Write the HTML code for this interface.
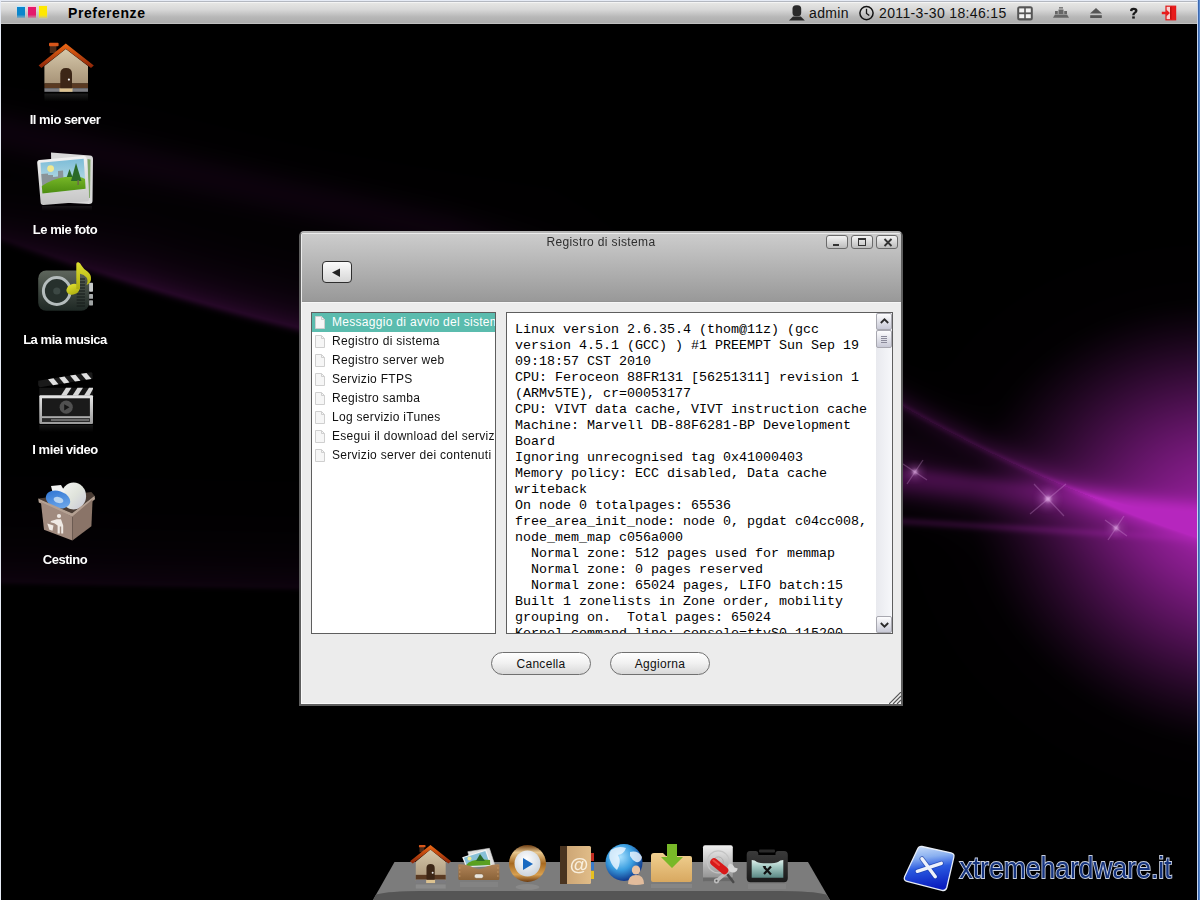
<!DOCTYPE html>
<html><head><meta charset="utf-8">
<style>
*{margin:0;padding:0;box-sizing:border-box}
html,body{width:1200px;height:900px;overflow:hidden;font-family:"Liberation Sans",sans-serif}
html{background:#000}
body{background:radial-gradient(ellipse 270px 225px at 1235px 525px,rgba(120,28,128,0.9),rgba(60,14,66,0.6) 55%,rgba(0,0,0,0) 100%),#000}
#bg{position:absolute;left:0;top:0}
.abs{position:absolute}
#bg{position:absolute;left:0;top:0;width:1200px;height:900px}
#topbar{position:absolute;left:0;top:0;width:1200px;height:24px;background:linear-gradient(#e6e6e4 12.5%,#d8d8d8 40%,#b8b8b8 70%,#acacac 95.8%,#c0c0c0 95.8%)}
#edgeL{position:absolute;left:0;top:0;width:1px;height:900px;background:#e6ebf5}
#edgeT{position:absolute;left:0;top:0;width:1200px;height:1px;background:#e6ebf5}
#edgeT2{position:absolute;left:1px;top:1px;width:1196px;height:1px;background:#b4b8c0}
#edgeT3{position:absolute;left:1px;top:2px;width:1196px;height:1px;background:#f4f4f4}
#edgeR{position:absolute;left:1197px;top:0;width:1px;height:900px;background:#c8d6ee}
#edgeR2{position:absolute;left:1198px;top:0;width:2px;height:900px;background:linear-gradient(90deg,#3a68b0 50%,#5a8ad0 50%)}
.tbtext{position:absolute;top:4px;font-size:14px;letter-spacing:0.36px;color:#111;line-height:18px}
.dlabel{position:absolute;width:130px;left:0;text-align:center;color:#fff;font-weight:bold;font-size:13px;letter-spacing:-0.45px;line-height:16px}
#dlg{position:absolute;left:299px;top:231px;width:604px;height:475px;border:2px solid #5e5e5e;border-top-color:#b4b4b4;border-radius:5px 5px 0 0;background:#ececec;overflow:hidden;box-shadow:inset 1px -1px 0 #fafafa}
#dlgtitle{position:absolute;left:0;top:0;width:600px;height:69px;background:linear-gradient(#cdcdcd,#999 98%,#8e8e8e);box-shadow:inset 1px 1px 0 #ececec,0 1px 0 #f6f6f6}

.tbtn{position:absolute;width:22px;height:14px;border:1px solid #6a6a6a;border-radius:3px;background:linear-gradient(#f4f4f4,#bcbcbc)}
#list{position:absolute;left:10px;top:79px;width:185px;height:322px;border:1px solid #5e5e5e;background:#fff;overflow:hidden}
.sel{position:absolute;left:0;top:0;width:183px;height:19px;background:#5bbcae}
.li{position:absolute;left:0;height:19px;width:183px;white-space:nowrap;font-size:12px;letter-spacing:0.3px;line-height:19px;color:#111;padding-left:20px;overflow:hidden}
.doc{position:absolute;left:2px;top:2px}
#txt{position:absolute;left:205px;top:79px;width:387px;height:322px;border:1px solid #5e5e5e;background:#fff;overflow:hidden}
#log{position:absolute;left:8px;top:9px;font-size:13.33px;line-height:16px;color:#000;white-space:pre}
#sb{position:absolute;left:369px;top:0;width:16px;height:320px;background:linear-gradient(90deg,#e8e9ee,#f6f7fa)}
.sbb{position:absolute;left:0;width:16px;height:17px;border:1px solid #a8a8b0;border-radius:2px;background:linear-gradient(#fdfdfe,#c8c9d6)}
.pill{position:absolute;width:100px;height:23px;border:1px solid #707070;border-radius:12px;background:linear-gradient(#ffffff,#f0f0f0 50%,#d8d8d8);text-align:center;font-size:12px;letter-spacing:0.3px;line-height:23px;color:#111}
.mono{font-family:"Liberation Mono",monospace}
</style></head><body>
<canvas id="bg" width="1200" height="900"></canvas>
<script>
(function(){
var c=document.getElementById('bg'),ctx=c.getContext('2d'),W=1200,H=900;
var im=ctx.createImageData(W,H),D=im.data;
var cs=Math.cos(0.42),sn=Math.sin(0.42);
function ex(v){return Math.exp(v);}
for(var y=0;y<H;y++){for(var x=0;x<W;x++){
  var I=0;
  // right glow
  var dx=x-1235,dy=y-525,u=dx*0.97+dy*0.24,v=-dx*0.24+dy*0.97;
  var q=u*u/(270*270)+v*v/(225*225);var qq=Math.max(0,1-q);I+=0.66*qq*Math.sqrt(qq)+0.3*ex(-3*q);
  if(x>850){
    var t=(x-903)/297;
    var xx=x-903;
    var y1c=406+0.57*xx-0.00047*xx*xx;
    var d1=y-y1c;
    var tc=Math.max(0,Math.min(1,t));
    var a1=0.5+0.18*tc;
    I+=a1*(0.26*ex(-d1*d1/16)+0.22*ex(-d1*d1/200)+0.12*(d1<0?ex(-d1*d1/600):0));
    var yh2=462+xx*0.3;var dh2=y-yh2;I+=0.13*ex(-dh2*dh2/1400)*(1-0.6*tc);
    // ribbon B
    var yb=476+xx*0.12;
    var db=y-yb;
    I+=0.34*(db<0?ex(-db*db/150):ex(-db*db/350))*(1-0.4*t);
    // streak 2
    var y2=521+xx*0.06;
    var d2=y-y2;
    I+=0.2*ex(-d2*d2/20)*Math.max(0,1-Math.max(0,t-0.4)*1.6);
  }
  if(x<700){
    var ye=236+0.36*x-0.000195*x*x;
    if(x>297) ye=326+(x-297)*0.15;
    var de=ye-y;
    var ib=de>=0?(0.75*ex(-de/20)+0.25*ex(-de/60)):ex(-de*de/30);
    I+=0.24*ib*(x<550?1:Math.max(0,1-(x-550)/150))*Math.min(1,0.45+x/260);
    var yh=131+0.223*x;
    var dh=y-yh;
    I+=0.07*ex(-dh*dh/500)*(x<450?1:Math.max(0,1-(x-450)/150));
    var yl=580+x*0.02;
    var dl=yl-y;
    I+=0.085*(dl>=0?ex(-dl/32):ex(-dl*dl/16))*(x<420?1:Math.max(0,1-(x-420)/200));
  }
  if(I>1.2)I=1.2;
  var k=(y*W+x)*4;
  D[k]=Math.min(255,I*152);D[k+1]=Math.min(255,I*32);D[k+2]=Math.min(255,I*158);D[k+3]=255;
}}
ctx.putImageData(im,0,0);
})();
</script>
<svg id="spk" width="1200" height="900" viewBox="0 0 1200 900" style="position:absolute;left:0;top:0">
  <defs>
    <filter id="b15" x="-50%" y="-50%" width="200%" height="200%"><feGaussianBlur stdDeviation="1.8"/></filter>
    <filter id="b4" x="-50%" y="-50%" width="200%" height="200%"><feGaussianBlur stdDeviation="4"/></filter>
    <filter id="b1" x="-50%" y="-50%" width="200%" height="200%"><feGaussianBlur stdDeviation="0.7"/></filter>
  </defs>
  <g fill="#d080d8" opacity="0.45">
    <circle cx="915" cy="472" r="6" filter="url(#b4)"/>
    <circle cx="1048" cy="499" r="8" filter="url(#b4)"/>
    <circle cx="1116" cy="528" r="6" filter="url(#b4)"/>
  </g>
  <g fill="#f0c0f4" opacity="0.85">
    <circle cx="915" cy="472" r="2.2" filter="url(#b15)"/>
    <circle cx="1048" cy="499" r="2.8" filter="url(#b15)"/>
    <circle cx="1116" cy="528" r="2.2" filter="url(#b15)"/>
  </g>
  <g stroke="#e8b0ee" stroke-width="1.3" opacity="0.26" filter="url(#b1)">
    <path d="M903 464L927 480M907 484L923 460"/>
    <path d="M1034 484L1064 516M1066 484L1030 514"/>
    <path d="M1105 520L1127 536M1108 540L1124 516"/>
  </g>
</svg>

<div id="topbar"></div>
<div id="edgeT"></div><div id="edgeT2"></div><div id="edgeT3"></div>
<div id="edgeL"></div><div id="edgeR"></div><div id="edgeR2"></div>
<!-- logo squares -->
<div class="abs" style="left:17px;top:7px;width:8px;height:11px;background:linear-gradient(#0a86cc 70%,rgba(10,134,204,0.25));box-shadow:0 -1px 1px #bfe6ff"></div>
<div class="abs" style="left:28px;top:7px;width:8px;height:11px;background:linear-gradient(#e4196b 70%,rgba(228,25,107,0.25));box-shadow:0 -1px 1px #ffc8dc"></div>
<div class="abs" style="left:39px;top:6px;width:8px;height:12px;background:linear-gradient(#ffe800 75%,rgba(255,232,0,0.3));box-shadow:0 0 1px #fff080"></div>
<div class="abs" style="left:68px;top:4px;font-size:14px;font-weight:bold;letter-spacing:0.6px;color:#000;line-height:18px">Preferenze</div>

<svg class="abs" style="left:788px;top:4px" width="18" height="18" viewBox="0 0 18 18"><rect x="4.5" y="1.2" width="8.7" height="11" rx="3.5" fill="#2a2a2a"/><path d="M1 16.6L5 12.5H12.8L16.8 16.6Z" fill="#2a2a2a"/></svg>
<svg class="abs" style="left:858px;top:5px" width="17" height="17" viewBox="0 0 17 17"><circle cx="8.5" cy="8.1" r="6.6" fill="none" stroke="#151515" stroke-width="1.5"/><path d="M8.5 3.8V8.4L11.3 10.6" fill="none" stroke="#151515" stroke-width="1.3"/></svg>
<svg class="abs" style="left:1016px;top:5px" width="18" height="17" viewBox="0 0 18 17"><rect x="1.2" y="1.2" width="15.6" height="14.2" rx="2.5" fill="#555"/><rect x="3.2" y="3.4" width="5" height="4" fill="#f2f2f2"/><rect x="9.8" y="3.4" width="5" height="4" fill="#f2f2f2"/><rect x="3.2" y="9.2" width="5" height="4" fill="#f2f2f2"/><rect x="9.8" y="9.2" width="5" height="4" fill="#f2f2f2"/></svg>
<svg class="abs" style="left:1052px;top:6px" width="18" height="13" viewBox="0 0 18 13"><rect x="7" y="1.2" width="4" height="1.3" fill="#666"/><rect x="6.5" y="3.5" width="5" height="4.5" fill="#666"/><rect x="3" y="5" width="2.8" height="3" fill="#666"/><rect x="12.2" y="5" width="2.8" height="3" fill="#666"/><path d="M3 8.6H15L17 11.8H1Z" fill="#666"/></svg>
<svg class="abs" style="left:1089px;top:7px" width="14" height="12" viewBox="0 0 14 12"><path d="M7 1L13 6.6H1Z" fill="#555"/><rect x="1.2" y="8.2" width="11.6" height="2.8" fill="#555"/></svg>
<svg class="abs" style="left:1128px;top:7px" width="12" height="12" viewBox="0 0 12 12"><path d="M2 4Q2 0.8 5.5 0.8Q9.5 0.8 9.5 3.8Q9.5 5.6 7.5 6.6Q6.6 7.1 6.6 8.2H4.2Q4.2 6.2 5.8 5.3Q7 4.6 7 3.8Q7 2.9 5.6 2.9Q4.4 2.9 4.4 4.2Z" fill="#1a1a1a"/><rect x="4.2" y="9.4" width="2.6" height="2.2" fill="#1a1a1a"/></svg>
<svg class="abs" style="left:1161px;top:5px" width="16" height="16" viewBox="0 0 16 16"><rect x="5" y="1.2" width="9.6" height="13.6" fill="#f8d0d0" stroke="#e01818" stroke-width="1.2"/><path d="M9 1.2H14.6V14.8H9Z" fill="#e81c1c"/><path d="M9 2.5L10.5 1.2V14.8L9 13.5Z" fill="#c01010"/><path d="M0.8 6.7H5.2V4.6L9 8L5.2 11.4V9.3H0.8Z" fill="#e81c1c"/></svg>
<div class="tbtext" style="left:809px">admin</div>
<div class="tbtext" style="left:879px">2011-3-30 18:46:15</div>


<!-- desktop icons -->
<svg class="abs" style="left:30px;top:36px" width="70" height="70" viewBox="0 0 70 70">
  <defs>
    <linearGradient id="hwall" x1="0" y1="0" x2="0" y2="1"><stop offset="0" stop-color="#d6c8aa"/><stop offset="1" stop-color="#a89478"/></linearGradient>
    <linearGradient id="hroof" x1="0" y1="0" x2="0" y2="1"><stop offset="0" stop-color="#ee6a16"/><stop offset="1" stop-color="#8c2408"/></linearGradient>
    <linearGradient id="refl" x1="0" y1="0" x2="0" y2="1"><stop offset="0" stop-color="#fff" stop-opacity="0.22"/><stop offset="1" stop-color="#fff" stop-opacity="0"/></linearGradient>
  </defs>
  <rect x="19.8" y="8" width="6.6" height="9" fill="#4a2a18"/>
  <rect x="19" y="6.8" width="9.6" height="3.4" rx="1" fill="#d8561a"/>
  <path d="M14.4 30V47.4H58V30L35.8 13Z" fill="url(#hwall)"/>
  <path d="M8.6 29.6L35.8 7.4L63.8 29.6L61 32L35.8 12.8L11.4 32Z" fill="url(#hroof)"/>
  <rect x="14.4" y="47.4" width="43.6" height="4.8" fill="#5a3a22"/>
  <rect x="14.4" y="52.2" width="43.6" height="3.6" fill="#7c7c80"/>
  <rect x="29.5" y="52.2" width="13" height="3.6" fill="#dcc290"/>
  <path d="M30.3 52.2V37.5Q30.3 31.9 36.15 31.9Q42 31.9 42 37.5V52.2Z" fill="#3c2616"/>
  <circle cx="38.9" cy="43.6" r="1.1" fill="#eee"/>
  <rect x="14.4" y="57.5" width="43.6" height="8" fill="url(#refl)" opacity="0.5"/>
</svg>
<svg class="abs" style="left:30px;top:146px" width="70" height="70" viewBox="0 0 70 70">
  <defs>
    <linearGradient id="psky" x1="0" y1="0" x2="0" y2="1"><stop offset="0" stop-color="#7cbcd8"/><stop offset="1" stop-color="#d0e8e8"/></linearGradient>
    <linearGradient id="pgr" x1="0" y1="0" x2="0" y2="1"><stop offset="0" stop-color="#78b828"/><stop offset="1" stop-color="#4c8c10"/></linearGradient>
    <linearGradient id="pfr" x1="0" y1="0" x2="0" y2="1"><stop offset="0" stop-color="#f2f2f2"/><stop offset="1" stop-color="#c4c4c4"/></linearGradient>
  </defs>
  <path d="M21 6.6L60 9.5Q63 9.8 63 13L62.5 55Q62.5 58 59 58L22 56Z" fill="#d8d8d8"/>
  <path d="M57.5 13L60.5 13.5L60 52L58.8 52Z" fill="#6a9a4a" opacity="0.8"/>
  <path d="M9.5 14L53.5 10.1Q56.5 10 56.8 13L59.2 52.5Q59.3 55.3 56.5 55.5L13.5 59Q10.8 59.2 10.6 56.3L7.2 17Q7 14.3 9.5 14Z" fill="url(#pfr)"/>
  <path d="M10.5 16.7L53.7 12.8L55.6 42.8L12.4 47.4Z" fill="url(#psky)"/>
  <path d="M11.3 28L18 27.5L18 29L23 29L23 31L28 30.5L28 25L33 24.5L33.6 35L12.2 40Z" fill="#8a9498"/>
  <path d="M12.4 47.4L11.8 40Q22 33 35 31Q48 29 55 33L55.6 42.8Z" fill="url(#pgr)"/>
  <path d="M46 17L51.5 35H41Z" fill="#2a6a28"/><rect x="47.4" y="34" width="1.5" height="5" fill="#6a6a4a"/>
  <path d="M39.5 23L42.5 31H36.8Z" fill="#2a6a28"/>
  <circle cx="20.6" cy="22.6" r="3.4" fill="#f0e890"/>
  <rect x="12" y="60" width="50" height="5" fill="url(#refl)" opacity="0.35"/>
</svg>
<svg class="abs" style="left:30px;top:256px" width="70" height="70" viewBox="0 0 70 70">
  <defs>
    <linearGradient id="rbody" x1="0" y1="0" x2="0" y2="1"><stop offset="0" stop-color="#5e665c"/><stop offset="1" stop-color="#1e2824"/></linearGradient>
    <linearGradient id="note" x1="0" y1="0" x2="0" y2="1"><stop offset="0" stop-color="#dede30"/><stop offset="1" stop-color="#b0b010"/></linearGradient>
  </defs>
  <rect x="8.2" y="14.4" width="51" height="40.4" rx="8" fill="url(#rbody)"/>
  <g stroke="#141a18" stroke-width="1.2"><path d="M46.7 23H55M46.7 26H55M46.7 29H55M46.7 32H55M46.7 35H55M46.7 38H55M46.7 41H55M46.7 44H55M46.7 47H55M46.7 50H55"/></g>
  <circle cx="26.8" cy="35" r="13.4" fill="#26302c" stroke="#b4bcbc" stroke-width="3"/>
  <circle cx="26.8" cy="35" r="3.6" fill="#3c4844"/>
  <rect x="59.1" y="26.8" width="3.9" height="9" rx="0.8" fill="#c8cccc"/>
  <rect x="59.1" y="38.1" width="3.9" height="4.7" rx="0.6" fill="#a8acac"/>
  <rect x="59.1" y="44.3" width="3.9" height="5.1" rx="0.6" fill="#a0a4a4"/>
  <ellipse cx="43" cy="33.3" rx="6.8" ry="5.2" transform="rotate(-22 43 33.3)" fill="url(#note)"/><path d="M46.3 33V8Q46.3 5.8 48.5 6.3Q50.5 7 51.5 9.5Q53.5 13 57.5 15.5Q61.5 18.5 61 23.5Q60.5 27 56.5 29Q58.5 24.5 56.5 21.5Q54 18.5 50 17.8V33Z" fill="url(#note)"/>
</svg>
<svg class="abs" style="left:30px;top:366px" width="70" height="70" viewBox="0 0 70 70">
  <defs>
    <linearGradient id="vfr" x1="0" y1="0" x2="0" y2="1"><stop offset="0" stop-color="#e8e8e8"/><stop offset="1" stop-color="#9a9a9a"/></linearGradient>
  </defs>
  <path d="M8.2 14.8L60.7 6.2Q62 6 62.3 7.2L62.8 12.6L10.1 21.2Q8.5 21 8.2 19Z" fill="#1a1a1a"/>
  <g fill="#e0e0e0"><path d="M18 13.2L23.5 12.3L28.5 18.3L23 19.2Z"/><path d="M29 11.4L34.5 10.5L39.5 16.5L34 17.4Z"/><path d="M40 9.6L45.5 8.7L50.5 14.7L45 15.6Z"/><path d="M51 7.8L56.5 6.9L61.5 12.9L56 13.8Z"/></g>
  <rect x="9.3" y="21.8" width="53.7" height="7.8" fill="#161616"/>
  <g fill="#d8d8d8"><path d="M31 29.6L36 21.8H41.5L36.5 29.6Z"/><path d="M42.5 29.6L47.5 21.8H53L48 29.6Z"/><path d="M54 29.6L59 21.8H63V23L59.5 29.6Z"/></g>
  <rect x="9.3" y="29.2" width="53.7" height="28.8" rx="1" fill="url(#vfr)"/>
  <rect x="12" y="32.3" width="47.9" height="17.9" fill="#1a1a1a"/>
  <circle cx="36.2" cy="41.2" r="6.6" fill="#505050"/>
  <path d="M34.2 38.2L39.5 41.3L34.2 44.4Z" fill="#151515"/>
  <rect x="12" y="52.1" width="47.9" height="3.9" fill="#2a2a2a"/>
  <rect x="21" y="53.3" width="38" height="1.4" fill="#888"/>
  <rect x="9.3" y="59" width="53.7" height="7" fill="url(#refl)" opacity="0.4"/>
</svg>
<svg class="abs" style="left:30px;top:476px" width="70" height="70" viewBox="0 0 70 70">
  <defs>
    <linearGradient id="tdisc" x1="0" y1="0" x2="1" y2="1"><stop offset="0" stop-color="#2a70d0"/><stop offset="1" stop-color="#78b0ee"/></linearGradient>
    <linearGradient id="tcd" x1="0" y1="0" x2="1" y2="1"><stop offset="0" stop-color="#f4f4f4"/><stop offset="0.5" stop-color="#e0e4dc"/><stop offset="1" stop-color="#c8c8d8"/></linearGradient>
  </defs>
  <path d="M8.2 22.6L61.4 15.9L64.6 19.8L42 37.3Z" fill="#4a3c34"/>
  <ellipse cx="43.6" cy="20" rx="12.5" ry="13.5" fill="url(#tcd)"/>
  <path d="M21 10L31 9L35 16L23 18Z" fill="#f2f2f2"/>
  <ellipse cx="28" cy="23.5" rx="12.5" ry="8.5" transform="rotate(18 28 23.5)" fill="url(#tdisc)"/>
  <ellipse cx="28.5" cy="24" rx="5" ry="3" transform="rotate(18 28.5 24)" fill="#b8d4f0"/>
  <path d="M8.2 22.6L42 37.3L64.6 19.8L65 23.2L42.4 41L8.8 26.4Z" fill="#b4a092"/>
  <path d="M10.9 26L42.4 40.4V64.6L14 53.7Z" fill="#a08a7e"/>
  <path d="M42.4 40.4L62.6 23.3L61.4 50.2L42.4 64.6Z" fill="#8a7468"/>
  <g fill="#efe9e4"><circle cx="29" cy="40" r="2.1"/><path d="M26.8 43.2H31L33.2 49.5V57.5H31.2V50.5H29.8V57.5H27.6V49.5L24.3 47.3L20.5 46.2L21 45Z"/><path d="M17.3 47.5L23.5 49.5L22.5 54.8L19.3 53.8Z"/></g>
</svg>
<div class="dlabel" style="top:112px">Il mio server</div>
<div class="dlabel" style="top:222px">Le mie foto</div>
<div class="dlabel" style="top:332px">La mia musica</div>
<div class="dlabel" style="top:442px">I miei video</div>
<div class="dlabel" style="top:552px">Cestino</div>


<!-- dock -->
<svg class="abs" style="left:360px;top:830px" width="480" height="70" viewBox="0 0 480 70">
  <defs>
    <linearGradient id="shelf" x1="0" y1="0" x2="0" y2="1"><stop offset="0" stop-color="#8a8a8a"/><stop offset="1" stop-color="#6c6c6c"/></linearGradient>
    <linearGradient id="shfront" x1="0" y1="0" x2="0" y2="1"><stop offset="0" stop-color="#9a9a9a"/><stop offset="0.2" stop-color="#5c5c5c"/><stop offset="1" stop-color="#3c3c3c"/></linearGradient>
    <linearGradient id="dwall" x1="0" y1="0" x2="0" y2="1"><stop offset="0" stop-color="#d6c8aa"/><stop offset="1" stop-color="#a89478"/></linearGradient>
    <linearGradient id="droof" x1="0" y1="0" x2="0" y2="1"><stop offset="0" stop-color="#ee6a16"/><stop offset="1" stop-color="#8c2408"/></linearGradient>
    <linearGradient id="dtray" x1="0" y1="0" x2="0" y2="1"><stop offset="0" stop-color="#b08458"/><stop offset="1" stop-color="#8a6238"/></linearGradient>
    <linearGradient id="dgold" x1="0" y1="0" x2="0" y2="1"><stop offset="0" stop-color="#6a3a10"/><stop offset="0.2" stop-color="#e8c890"/><stop offset="0.5" stop-color="#a86a20"/><stop offset="0.8" stop-color="#d8a050"/><stop offset="1" stop-color="#6a3a10"/></linearGradient>
    <radialGradient id="dwhite" cx="0.45" cy="0.35" r="0.7"><stop offset="0" stop-color="#ffffff"/><stop offset="1" stop-color="#c8d0d8"/></radialGradient>
    <linearGradient id="dbook" x1="0" y1="0" x2="1" y2="0"><stop offset="0" stop-color="#c8a070"/><stop offset="1" stop-color="#e0bc88"/></linearGradient>
    <radialGradient id="dglobe" cx="0.4" cy="0.35" r="0.7"><stop offset="0" stop-color="#a8e0ff"/><stop offset="0.5" stop-color="#3a9ee0"/><stop offset="1" stop-color="#0a2a80"/></radialGradient>
    <linearGradient id="dfold" x1="0" y1="0" x2="0" y2="1"><stop offset="0" stop-color="#f0d090"/><stop offset="1" stop-color="#d8a860"/></linearGradient>
    <linearGradient id="ddisk" x1="0" y1="0" x2="0" y2="1"><stop offset="0" stop-color="#f0f0f0"/><stop offset="1" stop-color="#8a8a8a"/></linearGradient>
    <linearGradient id="dbox" x1="0" y1="0" x2="0" y2="1"><stop offset="0" stop-color="#3a3a3a"/><stop offset="1" stop-color="#1a1a1a"/></linearGradient>
    <linearGradient id="dscreen" x1="0" y1="0" x2="0" y2="1"><stop offset="0" stop-color="#e0f0ec"/><stop offset="0.35" stop-color="#a8ccc6"/><stop offset="1" stop-color="#5a8884"/></linearGradient>
  </defs>
  <path d="M34.5 32H448L470 70H13Z" fill="#7c7c7c"/>
  <path d="M16 64.5Q30 61 60 61H420Q452 61 466 64.5L470 70H13Z" fill="#555"/>
  <!-- house -->
  <g transform="translate(45.9 13.3) scale(0.686)">
    <rect x="19.8" y="4" width="7" height="9" fill="#4a2a18"/>
    <rect x="19" y="2.5" width="9.6" height="3.4" rx="1" fill="#d8561a"/>
    <path d="M14.4 27V55H58V27L35.8 9Z" fill="url(#dwall)"/>
    <path d="M6 26L35.8 2.5L65.8 26L62 29.5L35.8 9L10 29.5Z" fill="url(#droof)"/>
    <rect x="14.4" y="46" width="43.6" height="7" fill="#5a3a22"/>
    <rect x="14.4" y="53" width="43.6" height="5" fill="#7c7c80"/>
    <rect x="29.5" y="53" width="13" height="5" fill="#dcc290"/>
    <path d="M30 53V36Q30 30 36 30Q42 30 42 36V53Z" fill="#3c2616"/>
    <circle cx="39" cy="43" r="1.4" fill="#eee"/>
    <rect x="14.4" y="60" width="43.6" height="6" fill="#fff" opacity="0.12"/>
  </g>
  <!-- photo tray -->
  <g>
    <path d="M107.8 21.7L129.4 18.3L135 35.6L112 37Z" fill="#e0e0e0" stroke="#c8c8c8" stroke-width="0.6"/>
    <path d="M102.2 27.2L126.1 19.4L131.7 36L106 36.7Z" fill="#f4f4f4"/>
    <path d="M103.8 27.8L125.3 20.9L130.3 35L107 36Z" fill="#88c0d8"/>
    <path d="M106 35Q112 28 130 30L130.3 35L107 36Z" fill="#5aa020"/>
    <path d="M120 24L125 31H116Z" fill="#2a6a28"/>
    <circle cx="109.5" cy="28.5" r="2" fill="#f0e890"/>
    <path d="M98.3 34.4Q104 34 110 36Q119 42 128 36Q134 34 139.4 34.4V48.5Q139.4 50 138 50H99.7Q98.3 50 98.3 48.5Z" fill="url(#dtray)"/>
    <g fill="#c89a68"><circle cx="99.8" cy="38" r="0.7"/><circle cx="99.8" cy="42" r="0.7"/><circle cx="99.8" cy="46" r="0.7"/><circle cx="137.9" cy="38" r="0.7"/><circle cx="137.9" cy="42" r="0.7"/><circle cx="137.9" cy="46" r="0.7"/></g>
    <rect x="114.4" y="43.9" width="8.9" height="4.4" rx="1.8" fill="#e8e4dc" stroke="#7a5a38" stroke-width="0.5"/>
    <rect x="100" y="52" width="38" height="5" fill="#fff" opacity="0.06"/>
  </g>
  <!-- play -->
  <circle cx="167.5" cy="33.5" r="18.5" fill="url(#dgold)"/>
  <circle cx="167.5" cy="33.5" r="13" fill="url(#dwhite)"/>
  <path d="M163 28L173 34L163 40Z" fill="#1a6ac0"/>
  <ellipse cx="167.5" cy="57" rx="12" ry="3" fill="#fff" opacity="0.1"/>
  <!-- address book -->
  <rect x="200" y="16" width="31" height="38" rx="1.5" fill="url(#dbook)"/>
  <rect x="200" y="16" width="7" height="38" fill="#4a3420"/>
  <rect x="231" y="23" width="3" height="8" fill="#c02a20"/>
  <rect x="231" y="32" width="3" height="8" fill="#3a7ac8"/>
  <rect x="231" y="41" width="3" height="8" fill="#e8c020"/>
  <text x="219" y="40.5" font-family="Liberation Sans" font-weight="bold" font-size="19" fill="#f8eedc" text-anchor="middle">@</text>
  <!-- globe -->
  <circle cx="264" cy="32.5" r="18.5" fill="url(#dglobe)"/>
  <path d="M251 20Q258 15 266 18Q264 24 258 25Q262 32 257 40Q252 36 250 30Q248 25 251 20ZM270 22Q278 20 282 27Q281 33 276 32Q272 30 270 26Z" fill="#f0f8ff" opacity="0.8"/>
  <ellipse cx="276" cy="40" rx="4.2" ry="4.6" fill="#eac4a4"/>
  <path d="M268 54Q268 45 276 45Q284 45 284 54Q276 56 268 54Z" fill="#e2bc9c"/>
  <!-- folder download -->
  <path d="M291 26Q291 23 294 23H303L306 26H330Q332 26 332 28V50Q332 52 330 52H293Q291 52 291 50Z" fill="url(#dfold)"/>
  <path d="M307 14H317V27H323L312 38L301 27H307Z" fill="#78b828"/>
  <rect x="291" y="54" width="41" height="4" fill="#fff" opacity="0.08"/>
  <!-- disk + tools -->
  <rect x="343" y="15.2" width="29.8" height="36.1" rx="2" fill="url(#ddisk)"/>
  <circle cx="358.3" cy="31.9" r="11" fill="none" stroke="#c4c4c4" stroke-width="1.2"/>
  <circle cx="358.3" cy="31.9" r="5" fill="none" stroke="#b0b0b0" stroke-width="1"/>
  <rect x="343" y="47.5" width="29.8" height="3.8" fill="#6a6a6a"/>
  <path d="M365 41.3L373.3 51.9" stroke="#4a4a4a" stroke-width="2.5" stroke-linecap="round"/>
  <path d="M371 39L356.5 50.8" stroke="#bcbcbc" stroke-width="3.5" stroke-linecap="round"/>
  <circle cx="356.5" cy="50.8" r="2.6" fill="#bcbcbc"/><circle cx="356.5" cy="50.8" r="1" fill="#555"/>
  <path d="M370 33.5A5 5 0 1 0 377.8 38.5L374.5 37.5L372.8 34.8Z" fill="#d8d8d8"/>
  <path d="M354 32L364.5 40.5" stroke="#d81a1a" stroke-width="7.5" stroke-linecap="round"/>
  <path d="M353.5 30.5L359 35" stroke="#ff6a5a" stroke-width="2" stroke-linecap="round" opacity="0.6"/>
  <!-- toolbox -->
  <path d="M390 21H396Q398.3 21 398.3 23.5V25H415.5V23.5Q415.5 21 418 21H424Q427.8 21 427.8 25V48Q427.8 52.2 424 52.2H390.5Q386.7 52.2 386.7 48V25Q386.7 21 390 21Z" fill="url(#dbox)"/>
  <rect x="399" y="19.5" width="16" height="3" rx="1" fill="#2a2a2a"/>
  <path d="M391.7 30Q395 30 397 32Q399 33.3 407.5 33.3Q416 33.3 418 32Q420 30 423.3 30V47.8H391.7Z" fill="url(#dscreen)"/>
  <path d="M404 37L411 44.5M411 36.5L404 44" stroke="#111" stroke-width="2.2"/>
  <path d="M402.5 36L406 36L405 39Z" fill="#111"/>
  <rect x="388" y="54" width="38" height="5" fill="#fff" opacity="0.06"/>
</svg>
<!-- logo -->
<svg class="abs" style="left:895px;top:835px" width="300" height="65" viewBox="0 0 300 65">
  <defs>
    <linearGradient id="lg" x1="0" y1="0" x2="0.15" y2="1"><stop offset="0" stop-color="#d0e2fa"/><stop offset="0.3" stop-color="#8ab0f0"/><stop offset="0.55" stop-color="#2a5ae0"/><stop offset="1" stop-color="#0a1ec0"/></linearGradient>
  </defs>
  <path d="M27 11.5L56 17.8Q59.8 18.6 58.8 22.3L51.8 52.5Q50.8 56.2 47 55.3L12 46.3Q8.3 45.4 9.6 41.8L22.5 14.2Q24 11 27 11.5Z" fill="url(#lg)" stroke="#e8eef8" stroke-width="1.3"/>
  <path d="M27 23.7L40.3 41.7M22.3 36.3L46.3 28.3" stroke="#1a3aa0" stroke-width="5" stroke-linecap="round" opacity="0.6"/>
  <path d="M27 23.7L40.3 41.7M22.3 36.3L46.3 28.3" stroke="#eef2fa" stroke-width="3.4" stroke-linecap="round"/>
  <text x="64.5" y="42.5" font-family="Liberation Sans" font-size="29" fill="#16347e" stroke="#c8d0e0" stroke-width="1.8" paint-order="stroke" textLength="212" lengthAdjust="spacingAndGlyphs">xtremehardware.it</text>
</svg>

<div id="dlg">
  <div id="dlgtitle"></div>
  <div class="abs" style="left:0;top:1px;width:600px;text-align:center;font-size:12px;letter-spacing:0.37px;color:#2e2e2e;white-space:nowrap;line-height:16px">Registro di sistema</div>
  <div class="tbtn" style="left:525px;top:2px"><div class="abs" style="left:6px;top:8px;width:6px;height:2px;background:#333"></div></div>
  <div class="tbtn" style="left:550px;top:2px"><div class="abs" style="left:6px;top:2px;width:8px;height:8px;border:1px solid #333;border-top-width:2px"></div></div>
  <div class="tbtn" style="left:575px;top:2px"><svg class="abs" style="left:5px;top:1px" width="12" height="11" viewBox="0 0 12 11"><path d="M2.5 2L9.5 9M9.5 2L2.5 9" stroke="#333" stroke-width="1.8"/></svg></div>
  <div class="abs" style="left:21px;top:28px;width:30px;height:22px;border:1px solid #2e2e2e;border-radius:4px;background:linear-gradient(#fbfbfb,#d6d6d6)"><svg class="abs" style="left:8px;top:6px" width="10" height="10" viewBox="0 0 10 10"><path d="M1 4.5L9 0.5V9Z" fill="#222"/></svg></div>
  <div id="list">
    <div class="sel"></div>
    <div class="li" style="top:0;color:#fff"><svg class="doc" width="12" height="15" viewBox="0 0 12 15"><path d="M1.5 1.5H7.5L10.5 4.5V13.5H1.5Z" fill="#f6f6f6" stroke="#cfcfcf"/><path d="M7.5 1.5V4.5H10.5" fill="none" stroke="#cfcfcf"/></svg>Messaggio di avvio del sistema</div>
    <div class="li" style="top:19px"><svg class="doc" width="12" height="15" viewBox="0 0 12 15"><path d="M1.5 1.5H7.5L10.5 4.5V13.5H1.5Z" fill="#f6f6f6" stroke="#cfcfcf"/><path d="M7.5 1.5V4.5H10.5" fill="none" stroke="#cfcfcf"/></svg>Registro di sistema</div>
    <div class="li" style="top:38px"><svg class="doc" width="12" height="15" viewBox="0 0 12 15"><path d="M1.5 1.5H7.5L10.5 4.5V13.5H1.5Z" fill="#f6f6f6" stroke="#cfcfcf"/><path d="M7.5 1.5V4.5H10.5" fill="none" stroke="#cfcfcf"/></svg>Registro server web</div>
    <div class="li" style="top:57px"><svg class="doc" width="12" height="15" viewBox="0 0 12 15"><path d="M1.5 1.5H7.5L10.5 4.5V13.5H1.5Z" fill="#f6f6f6" stroke="#cfcfcf"/><path d="M7.5 1.5V4.5H10.5" fill="none" stroke="#cfcfcf"/></svg>Servizio FTPS</div>
    <div class="li" style="top:76px"><svg class="doc" width="12" height="15" viewBox="0 0 12 15"><path d="M1.5 1.5H7.5L10.5 4.5V13.5H1.5Z" fill="#f6f6f6" stroke="#cfcfcf"/><path d="M7.5 1.5V4.5H10.5" fill="none" stroke="#cfcfcf"/></svg>Registro samba</div>
    <div class="li" style="top:95px"><svg class="doc" width="12" height="15" viewBox="0 0 12 15"><path d="M1.5 1.5H7.5L10.5 4.5V13.5H1.5Z" fill="#f6f6f6" stroke="#cfcfcf"/><path d="M7.5 1.5V4.5H10.5" fill="none" stroke="#cfcfcf"/></svg>Log servizio iTunes</div>
    <div class="li" style="top:114px"><svg class="doc" width="12" height="15" viewBox="0 0 12 15"><path d="M1.5 1.5H7.5L10.5 4.5V13.5H1.5Z" fill="#f6f6f6" stroke="#cfcfcf"/><path d="M7.5 1.5V4.5H10.5" fill="none" stroke="#cfcfcf"/></svg>Esegui il download del servizio</div>
    <div class="li" style="top:133px"><svg class="doc" width="12" height="15" viewBox="0 0 12 15"><path d="M1.5 1.5H7.5L10.5 4.5V13.5H1.5Z" fill="#f6f6f6" stroke="#cfcfcf"/><path d="M7.5 1.5V4.5H10.5" fill="none" stroke="#cfcfcf"/></svg>Servizio server dei contenuti multimediali</div>
  </div>
  <div id="txt">
    <pre class="mono" id="log">Linux version 2.6.35.4 (thom@11z) (gcc
version 4.5.1 (GCC) ) #1 PREEMPT Sun Sep 19
09:18:57 CST 2010
CPU: Feroceon 88FR131 [56251311] revision 1
(ARMv5TE), cr=00053177
CPU: VIVT data cache, VIVT instruction cache
Machine: Marvell DB-88F6281-BP Development
Board
Ignoring unrecognised tag 0x41000403
Memory policy: ECC disabled, Data cache
writeback
On node 0 totalpages: 65536
free_area_init_node: node 0, pgdat c04cc008,
node_mem_map c056a000
  Normal zone: 512 pages used for memmap
  Normal zone: 0 pages reserved
  Normal zone: 65024 pages, LIFO batch:15
Built 1 zonelists in Zone order, mobility
grouping on.  Total pages: 65024
Kernel command line: console=ttyS0,115200</pre>
    <div id="sb">
      <div class="sbb" style="top:0"><svg class="abs" style="left:3px;top:4px" width="9" height="6" viewBox="0 0 9 6"><path d="M0.8 5L4.5 1.3L8.2 5" stroke="#2a2a2a" stroke-width="1.8" fill="none"/></svg></div>
      <div class="sbb" style="top:17px;height:18px"><div class="abs" style="left:4px;top:5px;width:6px;height:1px;background:#8a8a9a;box-shadow:0 2px 0 #8a8a9a,0 4px 0 #8a8a9a,0 6px 0 #8a8a9a"></div></div>
      <div class="sbb" style="top:303px"><svg class="abs" style="left:3px;top:5px" width="9" height="6" viewBox="0 0 9 6"><path d="M0.8 1L4.5 4.7L8.2 1" stroke="#2a2a2a" stroke-width="1.8" fill="none"/></svg></div>
    </div>
  </div>
  <div class="pill" style="left:190px;top:419px">Cancella</div>
  <div class="pill" style="left:309px;top:419px">Aggiorna</div>
  <svg class="abs" style="left:588px;top:459px" width="12" height="12" viewBox="0 0 12 12"><path d="M12 0L0 12M12 4L4 12M12 8L8 12" stroke="#555" stroke-width="1.2"/></svg>
</div>

</body></html>
